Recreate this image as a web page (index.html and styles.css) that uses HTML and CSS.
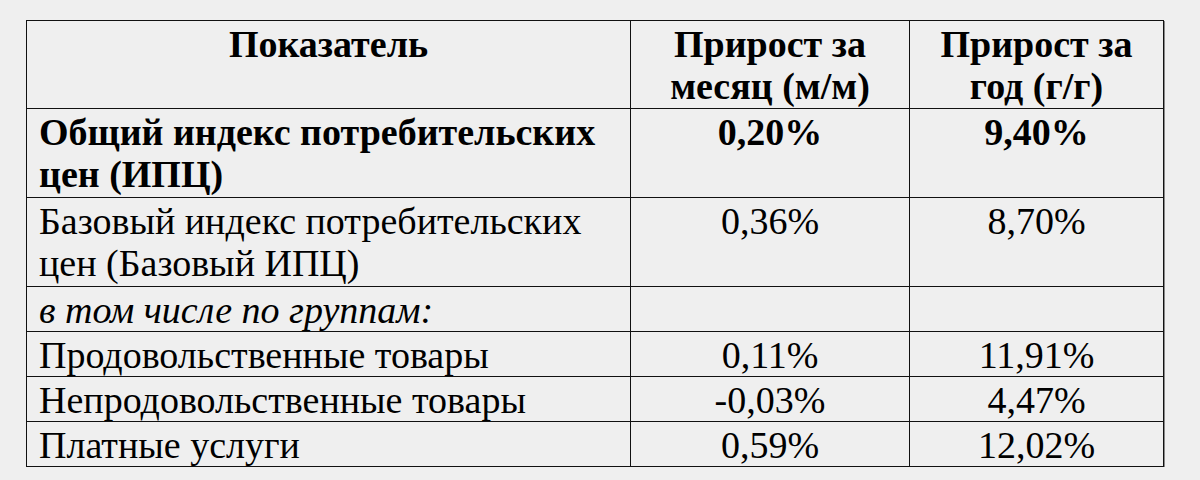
FILE: index.html
```html
<!DOCTYPE html>
<html lang="ru">
<head>
<meta charset="utf-8">
<link rel="stylesheet" href="styles.css">
</head>
<body>
<table class="cpi">
  <colgroup>
    <col class="c-name">
    <col class="c-mm">
    <col class="c-yy">
  </colgroup>
  <thead>
    <tr class="r-head">
      <th>Показатель</th>
      <th>Прирост за месяц (м/м)</th>
      <th>Прирост за год (г/г)</th>
    </tr>
  </thead>
  <tbody>
    <tr class="r-double bold">
      <td class="name">Общий индекс потребительских цен (ИПЦ)</td>
      <td>0,20%</td>
      <td>9,40%</td>
    </tr>
    <tr class="r-double">
      <td class="name">Базовый индекс потребительских цен (Базовый ИПЦ)</td>
      <td>0,36%</td>
      <td>8,70%</td>
    </tr>
    <tr class="r-single">
      <td class="name italic">в том числе по группам:</td>
      <td></td>
      <td></td>
    </tr>
    <tr class="r-single">
      <td class="name">Продовольственные товары</td>
      <td>0,11%</td>
      <td>11,91%</td>
    </tr>
    <tr class="r-single">
      <td class="name">Непродовольственные товары</td>
      <td>-0,03%</td>
      <td>4,47%</td>
    </tr>
    <tr class="r-single">
      <td class="name">Платные услуги</td>
      <td>0,59%</td>
      <td>12,02%</td>
    </tr>
  </tbody>
</table>
</body>
</html>
```

FILE: styles.css
```css
html, body {
  margin: 0;
  padding: 0;
  background: #efefef;
}
body {
  padding: 20px 0 0 26px;
  font-family: "Liberation Serif", "Times New Roman", serif;
  color: #000;
}
.cpi {
  border-collapse: collapse;
  table-layout: fixed;
  width: 1137px;
  border: 1px solid #111;
  box-shadow: 1px 1px 0 #888;
  font-size: 38px;
  line-height: 42px;
}
.c-name { width: 604px; }
.c-mm { width: 279px; }
.c-yy { width: 254px; }
.cpi th,
.cpi td {
  border: 1px solid #111;
  padding: 2px 12px 0 12px;
  vertical-align: top;
  text-align: center;
}
.cpi th {
  font-weight: bold;
}
.r-head { height: 88px; }
.r-double { height: 89px; }
.r-single { height: 45px; }
.cpi td.name { text-align: left; }
.bold td {
  font-weight: bold;
}
.italic { font-style: italic; }
```
